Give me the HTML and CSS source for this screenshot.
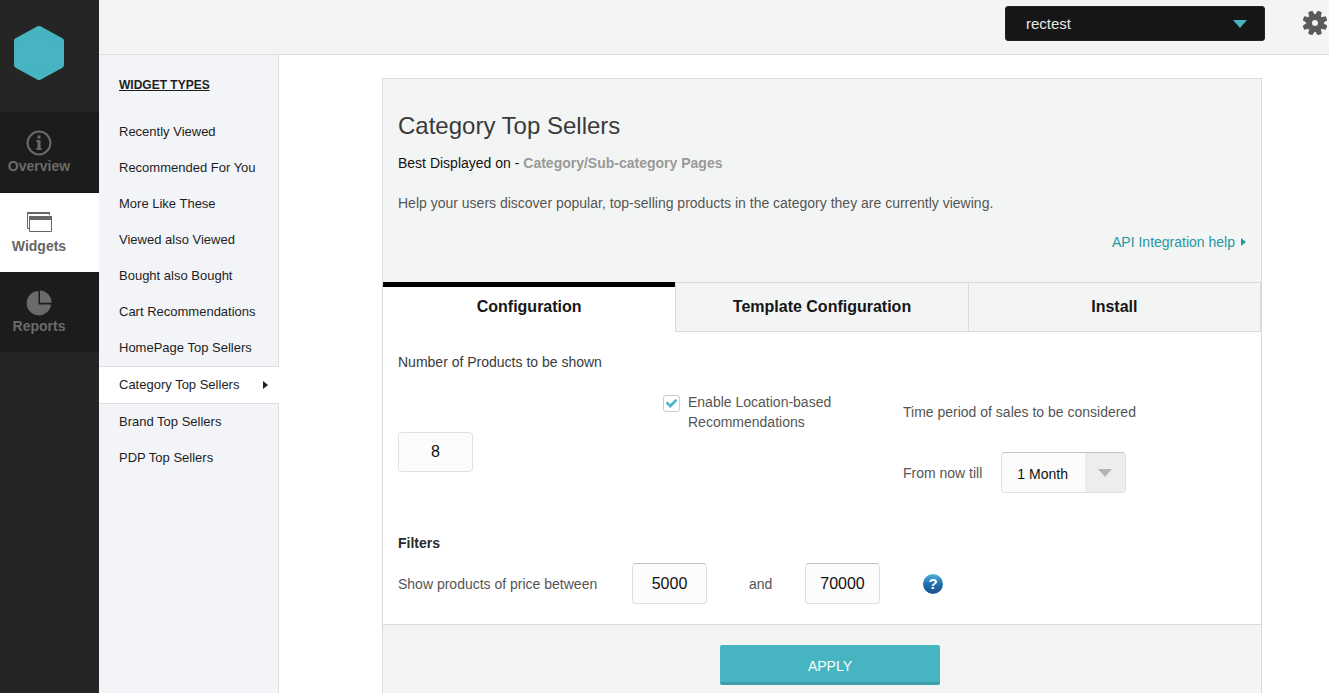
FILE: index.html
```html
<!DOCTYPE html>
<html lang="en">
<head>
  <meta charset="UTF-8">
  <title>Category Top Sellers</title>
  <link rel="stylesheet" href="styles.css">
</head>
<body>

<nav class="rail">
  <a class="logo" href="#" aria-label="Home">
    <svg width="52" height="56" viewBox="0 0 52 56"><path d="M26 4 L48 16 V40 L26 52 L4 40 V16 Z" fill="#46b5c1" stroke="#46b5c1" stroke-width="6" stroke-linejoin="round"/></svg>
  </a>
  <a class="rail-item" href="#">
    <svg width="26" height="26" viewBox="0 0 26 26">
      <circle cx="13" cy="13" r="11.4" fill="none" stroke="currentColor" stroke-width="2"/>
      <path d="M11.500 5.500h3v3h-3z M10.500 10h4v8h1v2h-5v-2h1v-6h-1z" fill="currentColor"/>
    </svg>
    <span>Overview</span>
  </a>
  <a class="rail-item active" href="#">
    <svg width="26" height="26" viewBox="0 0 26 26">
      <path d="M3 18.500H1.500V2.500h22V5" fill="none" stroke="currentColor"/>
      <path d="M1 2h23v2H1z M3 6h23v4H3z" fill="currentColor"/>
      <path d="M3.500 6.500h22v15h-22z" fill="none" stroke="currentColor"/>
    </svg>
    <span>Widgets</span>
  </a>
  <a class="rail-item" href="#">
    <svg width="26" height="26" viewBox="0 0 26 26">
      <path d="M12.500 1A12.200 12.200 0 1 0 25 14.500H12.500z" fill="currentColor"/>
      <path d="M14 0.500A12 12 0 0 1 25.500 12.800H14z" fill="currentColor"/>
    </svg>
    <span>Reports</span>
  </a>
</nav>

<div class="page">
  <header class="topbar">
    <div class="account">
      <select aria-label="Account">
        <option>rectest</option>
      </select>
    </div>
    <button class="settings-btn" type="button" aria-label="Settings">
      <svg width="24" height="24" viewBox="-12 -12 24 24">
        <circle r="6" fill="none" stroke="#5a5a5a" stroke-width="6"/>
        <g fill="#5a5a5a" transform="rotate(22.5)">
          <path id="tooth" d="M-3 -8L-2.200 -12.500H2.200L3 -8z"/>
          <use href="#tooth" transform="rotate(45)"/>
          <use href="#tooth" transform="rotate(90)"/>
          <use href="#tooth" transform="rotate(135)"/>
          <use href="#tooth" transform="rotate(180)"/>
          <use href="#tooth" transform="rotate(225)"/>
          <use href="#tooth" transform="rotate(270)"/>
          <use href="#tooth" transform="rotate(315)"/>
        </g>
      </svg>
    </button>
  </header>

  <div class="main">
    <aside class="types">
      <h2>WIDGET TYPES</h2>
      <ul>
        <li><a href="#">Recently Viewed</a></li>
        <li><a href="#">Recommended For You</a></li>
        <li><a href="#">More Like These</a></li>
        <li><a href="#">Viewed also Viewed</a></li>
        <li><a href="#">Bought also Bought</a></li>
        <li><a href="#">Cart Recommendations</a></li>
        <li><a href="#">HomePage Top Sellers</a></li>
        <li class="active"><a href="#">Category Top Sellers</a></li>
        <li><a href="#">Brand Top Sellers</a></li>
        <li><a href="#">PDP Top Sellers</a></li>
      </ul>
    </aside>

    <main class="content">
      <form class="panel">
        <div class="intro">
          <h1>Category Top Sellers</h1>
          <p class="best">Best Displayed on - <b>Category/Sub-category Pages</b></p>
          <p class="about">Help your users discover popular, top-selling products in the category they are currently viewing.</p>
          <a class="api-help" href="#">API Integration help</a>
        </div>

        <div class="tabs">
          <button type="button" class="active">Configuration</button>
          <button type="button">Template Configuration</button>
          <button type="button">Install</button>
        </div>

        <div class="config">
          <div class="options">
            <div class="count">
              <label for="count">Number of Products to be shown</label>
              <input class="box" type="text" id="count" value="8">
            </div>
            <div class="location">
              <input type="checkbox" id="location" checked>
              <label for="location">Enable Location-based Recommendations</label>
            </div>
            <div class="period">
              <p>Time period of sales to be considered</p>
              <div class="till">
                <label for="till">From now till</label>
                <div class="month">
                  <select id="till">
                    <option>1 Month</option>
                  </select>
                </div>
              </div>
            </div>
          </div>

          <h3>Filters</h3>
          <div class="price">
            <label class="price-label" for="min">Show products of price between</label>
            <input class="box" type="text" id="min" value="5000">
            <label class="and" for="max">and</label>
            <input class="box" type="text" id="max" value="70000">
            <button class="help" type="button">?</button>
          </div>
        </div>

        <div class="actions">
          <button class="apply" type="submit">APPLY</button>
        </div>
      </form>
    </main>
  </div>
</div>

</body>
</html>
```
FILE: styles.css
```css
* { box-sizing: border-box; }
body { margin: 0; display: flex; min-height: 100vh; font: 14px/20px "Liberation Sans", Arial, sans-serif; color: #555; background: #fff; }
h1, h2, h3, p, ul { margin: 0; padding: 0; }
a { text-decoration: none; }
button, input, select { font-family: inherit; margin: 0; }

/* left rail */
.rail { flex: 0 0 99px; background: #252525; }
.logo { display: block; height: 112px; padding: 25px 13px; }
.rail-item { display: flex; flex-direction: column; align-items: center; height: 80px; padding: 17px 21px 0 0; border-top: 1px solid #181818; background: #1b1c1b; color: #6a6a6a; font-weight: bold; }
.rail-item.active { background: #fff; color: #666; }

.page { flex: 1; display: flex; flex-direction: column; min-width: 0; }
.topbar { display: flex; justify-content: flex-end; align-items: flex-start; gap: 38px; height: 55px; padding: 6px 2px 0 0; background: #f3f5f4; border-bottom: 1px solid #dcdedd; }
.account { position: relative; width: 260px; }
.account select { appearance: none; display: block; width: 100%; height: 35px; padding: 0 20px; border: 1px solid #222; border-radius: 3px; background: #161616; color: #e8e8e8; font-size: 15px; }
.account::after { content: ""; position: absolute; right: 18px; top: 14px; border: 7px solid transparent; border-top: 8px solid #46b5c1; border-bottom: 0; pointer-events: none; }
.settings-btn { height: 34px; padding: 5px 0; border: 0; background: none; }
.settings-btn svg { display: block; }

.main { flex: 1; display: flex; }

/* widget types */
.types { flex: 0 0 180px; padding-top: 20px; background: #f2f4f8; border-right: 1px solid #dcdde0; }
.types h2 { margin: 0 20px 19px; color: #1e1e1e; font-size: 12px; line-height: 20px; text-decoration: underline; }
.types ul { list-style: none; }
.types a { display: flex; justify-content: space-between; align-items: center; height: 36px; padding: 0 11px 0 20px; color: #1e1e1e; font-size: 13px; }
.types .active { margin-right: -1px; background: #fff; border: solid #dcdde0; border-width: 1px 0; }
.types .active a::after { content: ""; border: 4px solid transparent; border-left: 5px solid #1e1e1e; border-right: 0; }

/* panel */
.content { flex: 1; display: flex; padding: 23px 67px 0 103px; }
.panel { flex: 1; display: flex; flex-direction: column; border: 1px solid #d8dbda; border-bottom: 0; }
.intro { padding: 32px 15px 30px; background: #f3f5f4; }
.intro h1 { margin-bottom: 12px; color: #3a3a3a; font-size: 24px; font-weight: normal; line-height: 30px; }
.best { margin-bottom: 20px; color: #111; }
.best b { color: #999; }
.about { margin-bottom: 19px; }
.api-help { display: flex; justify-content: flex-end; align-items: center; gap: 6px; color: #2596a3; }
.api-help::after { content: ""; border: 4px solid transparent; border-left: 5px solid #2596a3; border-right: 0; }

.tabs { display: grid; grid-template-columns: repeat(3, 1fr); border-right: 1px solid #d8dbda; }
.tabs button { height: 50px; padding: 0; border: solid #d8dbda; border-width: 1px 0 1px 1px; background: #f3f5f4; color: #161616; font-size: 16px; font-weight: bold; }
.tabs .active { padding-bottom: 6px; border: 0; border-top: 5px solid #000; background: #fff; }

.config { padding: 20px 15px; }
.options { display: grid; grid-template-columns: 265px 240px 1fr; margin-bottom: 40px; }
.count { display: flex; flex-direction: column; align-items: flex-start; gap: 60px; color: #3a3a3a; }
.box { width: 75px; height: 41px; padding: 0; border: 1px solid #e0e0e0; border-radius: 4px; background: #fcfcfc; color: #111; font-size: 16px; text-align: center; }
.count .box { height: 40px; }
.price .box { border-top-color: #c4c4c4; }
.location { display: flex; align-items: flex-start; gap: 8px; padding-top: 40px; }
.location input { appearance: none; flex: none; display: grid; place-items: center; width: 17px; height: 17px; margin-top: 3px; border: 1px solid #ccc; border-radius: 3px; background: #fff; }
.location input:checked::after { content: ""; width: 12px; height: 9px; background: #46b5c1; clip-path: polygon(0 45%, 18% 28%, 38% 58%, 84% 0, 100% 18%, 40% 100%); }
.location label { width: 160px; }
.period { padding-top: 50px; }
.period p { margin-bottom: 30px; }
.till { display: flex; align-items: center; gap: 19px; }
.month { position: relative; width: 125px; }
.month select { appearance: none; display: block; width: 100%; height: 41px; padding: 3px 15px 0; border: 1px solid #e0e0e0; border-top-color: #c4c4c4; border-radius: 4px; background: linear-gradient(to left, #ededed 40px, #fcfcfc 40px); color: #111; font-size: 14px; }
.month::after { content: ""; position: absolute; right: 14px; top: 17px; border: 7px solid transparent; border-top: 8px solid #b4b4b4; border-bottom: 0; pointer-events: none; }

.config h3 { margin-bottom: 10px; color: #2a2a2a; font-size: 14px; }
.price { display: flex; align-items: center; }
.price-label { width: 234px; }
.and { width: 98px; padding-left: 42px; }
.help { width: 20px; height: 20px; margin-left: 43px; padding: 0; border: 0; border-radius: 50%; background: linear-gradient(#4fb4d8, #1f6fae 50%, #1c4f8c); color: #fff; font-size: 15px; font-weight: bold; line-height: 20px; }

.actions { flex: 1; padding: 20px 20px 8px; border-top: 1px solid #d8dbda; background: #f3f5f4; text-align: center; }
.apply { width: 220px; height: 40px; margin-right: -16px; padding: 4px 0 0; border: 0; border-bottom: 3px solid #3f9faa; border-radius: 2px; background: #46b5c1; color: #fff; font-size: 14px; }
```
